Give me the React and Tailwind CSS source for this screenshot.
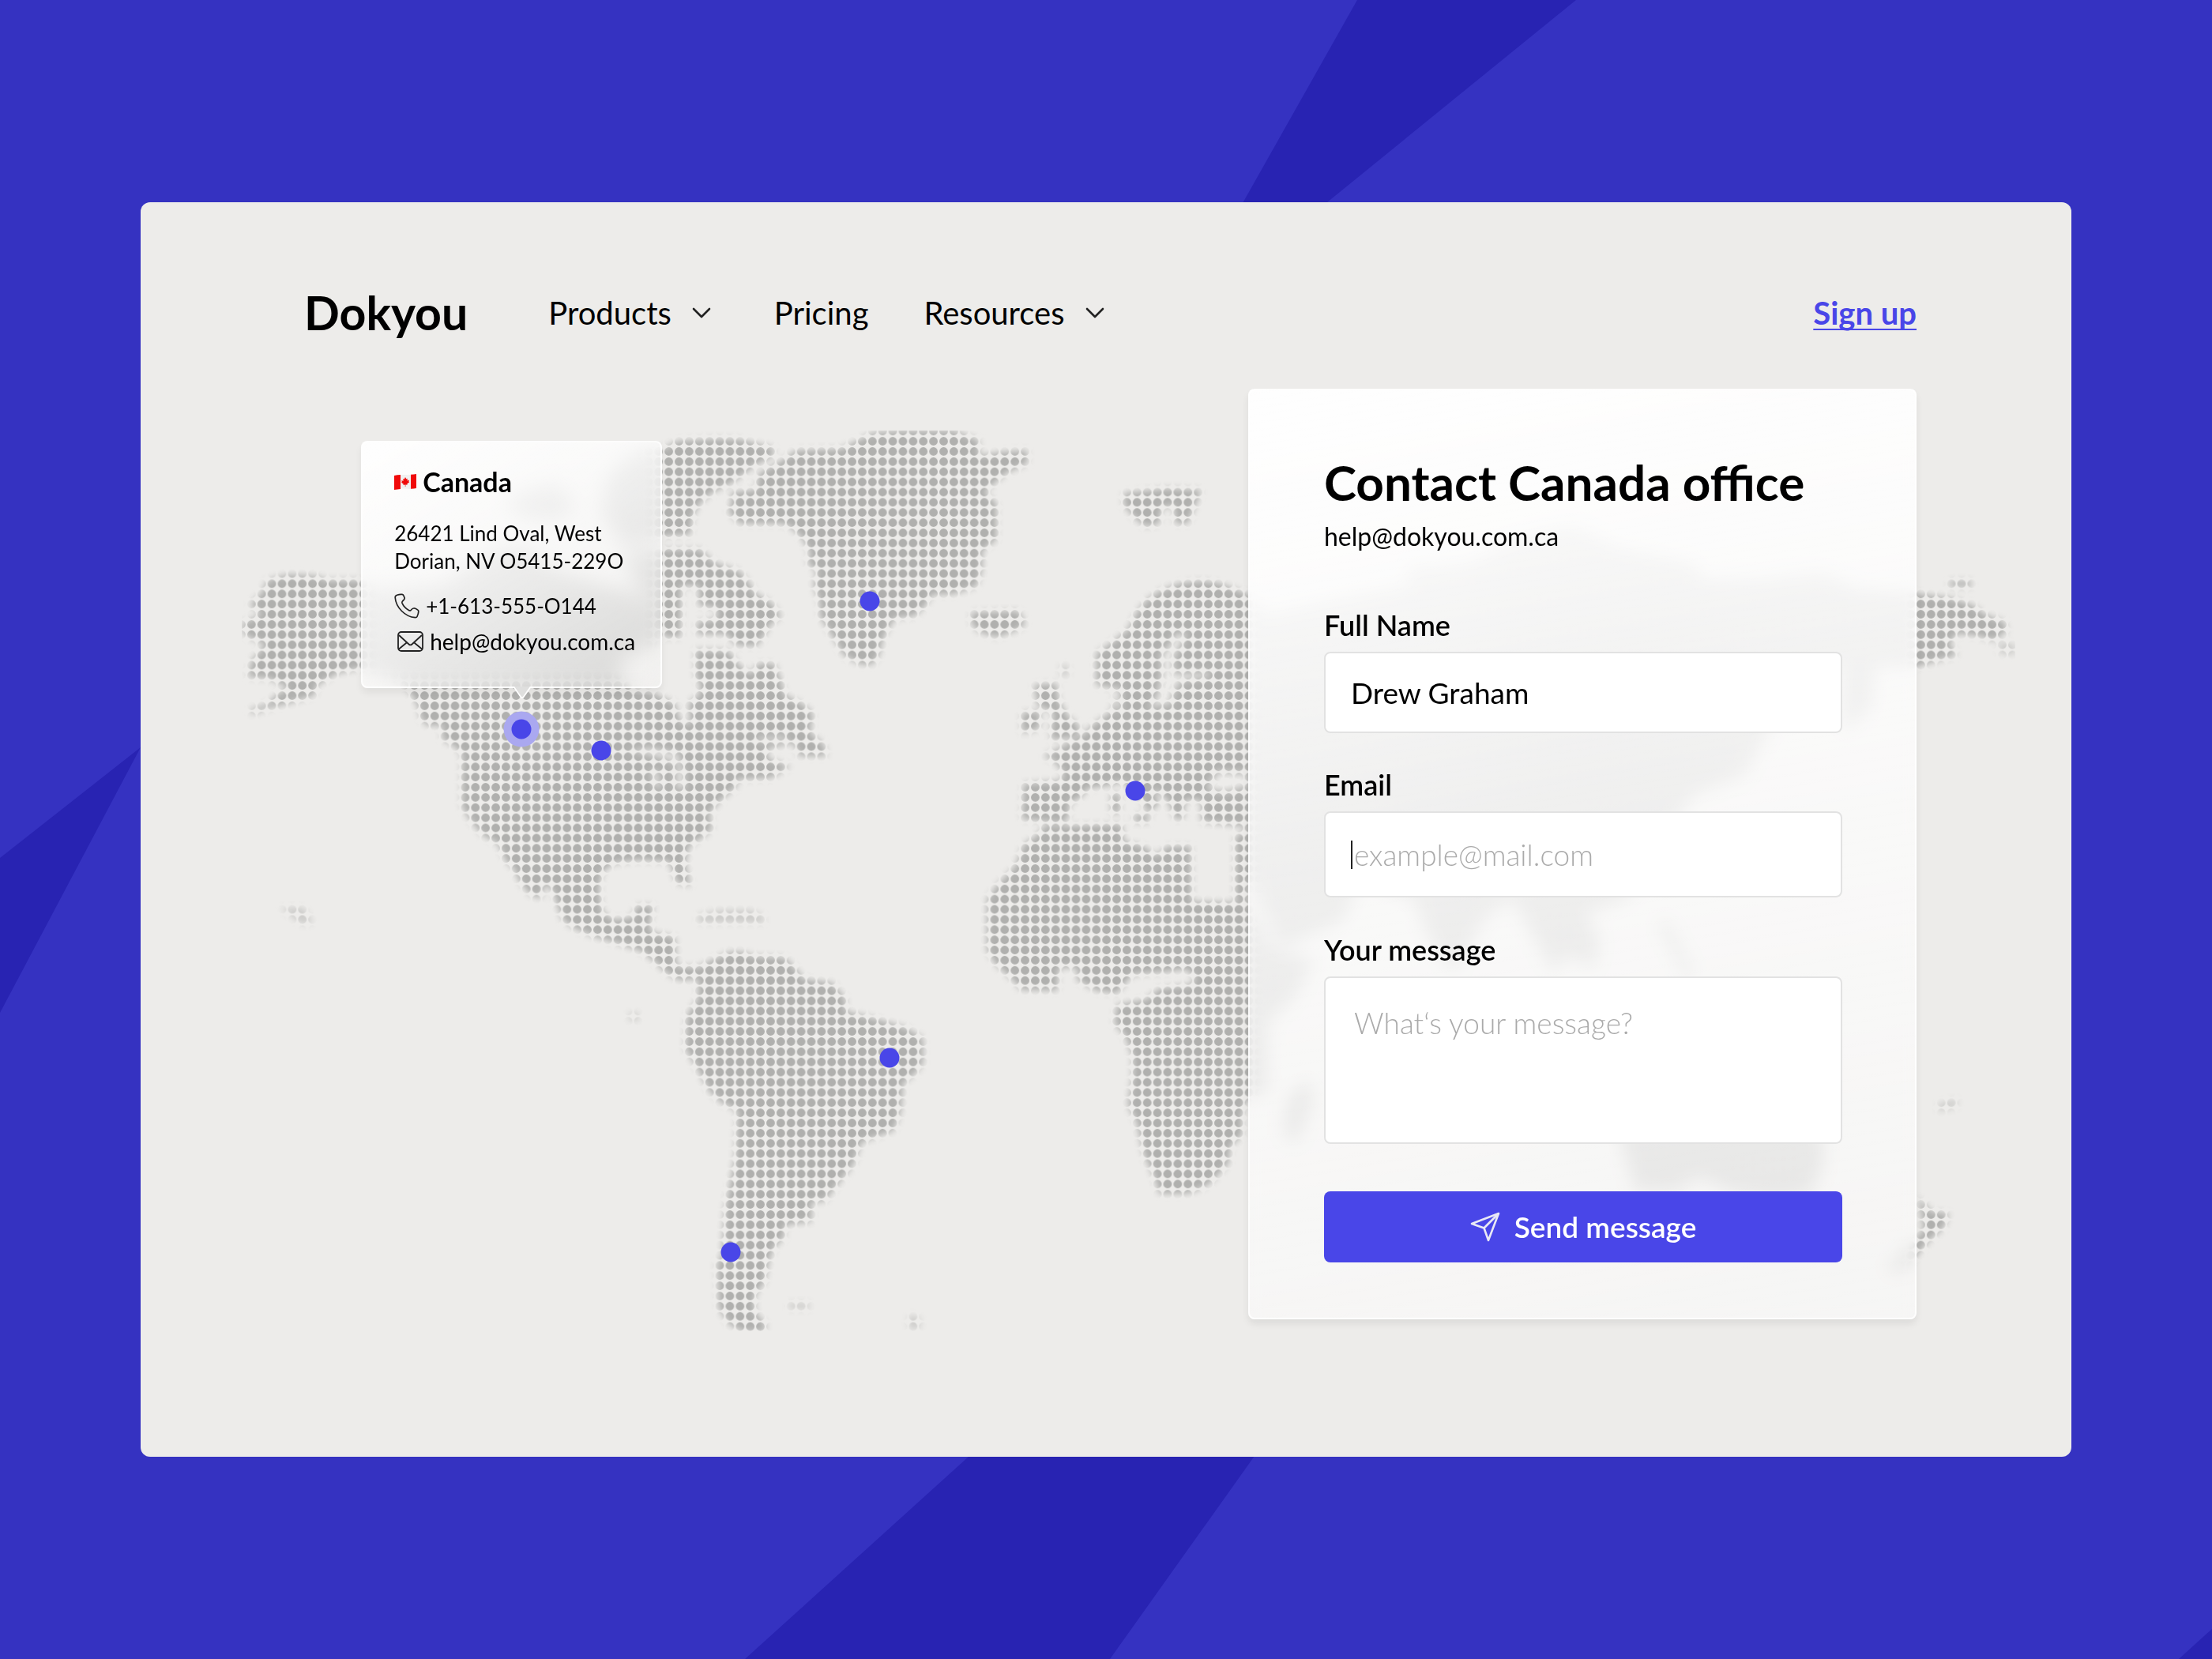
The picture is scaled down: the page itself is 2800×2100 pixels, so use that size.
import { useState } from 'react'

const landmasses = [
  // Alaska and the Aleutians
  '338,734 365,727 400,729 414,734 456,734 480,745 520,748 520,862 500,858 456,846 427,852 400,868 398,880 369,889 342,896 318,904 316,898 338,891 351,878 365,871 340,859 313,857 318,836 335,816 309,804 306,789 331,777 315,766 331,750',
  // Mainland North America
  '480,745 560,740 620,700 660,690 700,720 760,740 800,750 836,780 830,815 790,830 780,850 800,873 825,877 854,890 861,913 873,917 871,890 884,880 886,867 880,857 880,822 921,823 936,843 950,853 959,840 980,840 989,863 993,880 1014,890 1029,903 1025,927 1043,943 1046,957 1011,957 1004,940 971,948 971,960 1000,970 975,985 932,987 932,996 914,1011 898,1029 901,1050 887,1061 872,1071 867,1093 874,1121 856,1118 847,1091 807,1089 776,1093 762,1104 758,1125 762,1154 776,1164 800,1161 805,1146 827,1146 822,1171 825,1180 854,1186 856,1223 883,1224 883,1239 860,1241 843,1232 829,1218 811,1204 784,1195 753,1186 726,1175 711,1164 704,1143 699,1128 690,1118 684,1138 670,1132 657,1116 650,1100 639,1089 630,1068 610,1057 595,1039 584,1021 584,954 572,943 559,936 559,918 541,919 532,910 529,895 521,880 511,866 480,848',
  // Arctic islands
  '800,575 841,567 857,558 907,555 936,556 979,567 979,577 954,590 939,602 925,612 902,623 886,637 877,652 873,677 841,679 790,690 760,650 770,600',
  '640,630 700,610 730,640 700,660 650,650',
  '790,700 841,695 886,695 904,712 936,723 950,740 954,750 975,762 989,780 975,790 968,803 957,818 932,817 918,803 882,803 882,787 907,783 907,770 884,767 884,742 862,742 861,807 841,807 825,770 805,740',
  // Greenland
  '925,623 957,620 959,600 989,583 1007,570 1064,568 1086,557 1104,548 1139,545 1207,545 1239,557 1239,577 1268,572 1300,570 1300,587 1275,598 1257,613 1246,623 1261,637 1261,683 1243,697 1243,720 1236,742 1207,752 1179,753 1171,767 1157,780 1132,783 1118,807 1112,830 1104,841 1089,841 1068,830 1054,807 1037,780 1037,763 1029,740 1034,723 1021,713 1025,700 1014,680 1000,667 989,663 936,663 921,648 925,637',
  // Iceland, Svalbard
  '1229,775 1289,773 1298,790 1286,798 1261,807 1239,800 1229,790',
  '1422,624 1477,618 1520,620 1517,630 1507,653 1503,663 1487,663 1485,640 1470,643 1467,663 1450,667 1437,657 1422,640',
  // Great Britain, Ireland
  '1308,867 1337,865 1340,887 1352,907 1367,920 1363,933 1330,937 1330,920 1333,902 1313,893',
  '1293,902 1317,900 1315,923 1293,928',
  // Europe and Asia
  '1387,827 1407,813 1427,797 1437,777 1450,760 1467,748 1493,738 1520,735 1543,738 1580,752 1604,778 1673,762 1782,740 1782,717 1857,713 1914,684 1989,664 2046,692 2144,713 2155,733 2230,733 2305,725 2350,745 2426,751 2470,757 2497,766 2513,778 2537,787 2540,799 2523,811 2503,805 2477,802 2467,814 2477,829 2426,844 2374,843 2368,896 2333,925 2330,835 2280,860 2236,929 2207,982 2144,1006 2120,1040 2090,1100 2058,1138 2006,1157 2024,1187 2018,1224 1983,1209 1966,1231 1937,1179 1914,1138 1880,1160 1840,1231 1810,1190 1788,1138 1722,1115 1700,1165 1620,1200 1582,1110 1580,1143 1563,1141 1563,1060 1580,1047 1520,1040 1520,1013 1500,1013 1497,1037 1487,1037 1477,1013 1460,997 1467,1017 1453,1030 1440,1005 1420,990 1400,995 1377,998 1367,1010 1353,1017 1353,1033 1345,1042 1293,1037 1295,992 1343,988 1345,977 1333,963 1320,957 1347,943 1370,930 1383,917 1407,900 1410,880 1407,870 1387,867',
  '1406,1004 1417,1004 1417,1030 1406,1030',
  '1435,1031 1454,1031 1454,1041 1435,1041',
  // Africa, Madagascar
  '1310,1059 1323,1044 1353,1045 1420,1043 1422,1065 1447,1071 1463,1083 1477,1071 1507,1071 1508,1141 1582,1143 1610,1200 1662,1215 1640,1260 1604,1294 1604,1380 1577,1393 1572,1413 1572,1437 1557,1451 1555,1472 1540,1489 1527,1501 1503,1511 1467,1511 1460,1489 1447,1461 1438,1420 1427,1399 1433,1362 1433,1337 1423,1310 1410,1296 1413,1272 1450,1265 1467,1251 1507,1246 1513,1238 1500,1227 1473,1231 1433,1234 1413,1258 1387,1254 1363,1241 1363,1225 1340,1225 1338,1254 1292,1253 1282,1241 1259,1220 1249,1203 1249,1138 1262,1120 1285,1096 1295,1069',
  '1656,1364 1662,1394 1639,1449 1624,1434 1630,1390',
  // South America
  '883,1224 907,1212 923,1205 940,1205 953,1210 993,1212 1007,1226 1017,1239 1053,1244 1070,1264 1070,1280 1107,1289 1147,1301 1168,1314 1168,1346 1157,1360 1143,1371 1140,1406 1131,1431 1090,1446 1080,1474 1057,1503 1043,1521 1027,1521 1027,1546 993,1551 992,1567 980,1578 973,1596 967,1624 955,1639 955,1660 970,1678 966,1686 940,1686 922,1676 909,1656 907,1599 913,1589 917,1531 930,1464 933,1406 913,1396 897,1381 880,1349 867,1328 869,1285 883,1264 883,1239',
  // Australia, New Zealand, Indonesia
  '2050,1400 2110,1350 2180,1320 2230,1340 2270,1370 2305,1430 2308,1468 2293,1510 2250,1518 2190,1508 2150,1490 2121,1508 2070,1508 2052,1447',
  '2428,1516 2438,1526 2443,1533 2467,1536 2460,1554 2443,1569 2430,1584 2406,1610 2388,1606 2424,1570 2434,1556',
  '2098,1168 2110,1166 2144,1235 2136,1240',
  // Wrangel
  '2467,735 2495,735 2495,743 2467,743',
]

const faintIslands = [
  '354,1149 384,1149 396,1168 382,1170',
  '883,1158 910,1152 950,1152 967,1160 967,1168 883,1168',
  '998,1649 1024,1649 1024,1657 998,1657',
  '1150,1664 1164,1668 1164,1682 1150,1682',
  '796,1282 808,1282 808,1292 796,1292',
  '2453,1397 2477,1391 2477,1401 2453,1407',
  '2530,812 2550,816 2550,829 2530,827',
  '1342,842 1352,842 1352,856 1342,856',
]

// Baltic, Black Sea
const seas = [
  '1487,800 1503,800 1497,817 1487,833 1487,850 1533,850 1530,858 1497,863 1487,877 1483,893 1453,897 1463,877 1468,853 1468,827 1480,813',
  '1527,993 1540,974 1580,977 1580,997 1553,1005 1530,1003',
]

// Great Lakes, St. Lawrence, Danish straits
const lakes = [
  '793,950 822,944 860,952 866,975 850,966',
  '822,974 834,974 838,1000 826,996',
  '852,972 868,974 868,1000 854,1000',
  '958,932 996,930 996,938 958,940',
  '1388,869 1420,869 1420,900 1412,900 1408,872',
]

const pins = [
  { name: 'Canada', position: 'left-[19.73%] top-[42%]' },
  { name: 'United States', position: 'left-[23.87%] top-[43.7%]' },
  { name: 'Greenland', position: 'left-[37.77%] top-[31.78%]' },
  { name: 'Italy', position: 'left-[51.52%] top-[46.91%]' },
  { name: 'Brazil', position: 'left-[38.79%] top-[68.2%]' },
  { name: 'Chile', position: 'left-[30.58%] top-[83.69%]' },
]

function Backdrop() {
  return (
    <svg
      className="absolute inset-0 w-full h-full"
      viewBox="0 0 2800 2100"
      preserveAspectRatio="none"
      fill="#2823b2"
      aria-hidden="true"
    >
      <path d="M1718 0H1995L1680 256L1400 500H1436Z" />
      <path d="M1227 1843L1400 1700H1690L1588 1843L1405 2100H943Z" />
      <path d="M0 1086L178 946L0 1282Z" />
      <path d="M2758 2100L2800 2062V2100Z" />
    </svg>
  )
}

function WorldMap() {
  return (
    <svg className="absolute inset-0 w-full h-full" viewBox="178 256 2443 1588" aria-hidden="true">
      <defs>
        <pattern id="dots" x="375.8" y="745.3" width="12.885" height="12.88" patternUnits="userSpaceOnUse">
          <circle cx="6.44" cy="6.44" r="5.4" fill="#b0b0ae" />
        </pattern>
        <filter id="soften" x="0" y="0" width="100%" height="100%">
          <feGaussianBlur stdDeviation="4" />
        </filter>
        <mask id="land" maskUnits="userSpaceOnUse" x="178" y="256" width="2443" height="1588">
          <g filter="url(#soften)">
            <g fill="#fff">
              {landmasses.map((points) => <polygon key={points} points={points} />)}
            </g>
            <g fill="#888">
              {faintIslands.map((points) => <polygon key={points} points={points} />)}
            </g>
            <g fill="#000">
              {seas.map((points) => <polygon key={points} points={points} />)}
            </g>
            <g fill="#000" fillOpacity="0.8">
              {lakes.map((points) => <polygon key={points} points={points} />)}
            </g>
          </g>
        </mask>
      </defs>
      <rect x="178" y="256" width="2443" height="1588" fill="url(#dots)" mask="url(#land)" />
    </svg>
  )
}

function Chevron() {
  return (
    <svg className="w-6 h-6" viewBox="0 0 24 24" fill="none" stroke="#222" strokeWidth="2.600" strokeLinecap="round" strokeLinejoin="round" aria-hidden="true">
      <path d="M2 7L12 17L22 7" />
    </svg>
  )
}

function CanadaFlag() {
  return (
    <svg className="w-7 h-5" viewBox="0 0 28 20" aria-hidden="true">
      <path d="M0 2Q7 .5 14 1T28 0V18Q21 19.500 14 18.500T0 20Z" fill="#f1f1f1" />
      <path d="M0 2Q4 1 8 1V19Q4 19.500 0 20Z" fill="#f00a0a" />
      <path d="M21 .8Q25 .8 28 0V18Q25 18.600 21 18.700Z" fill="#f00a0a" />
      <path d="M14 4L15.300 6.300L16.800 5.700L16.500 8.500L19 7.600L18.400 9.500L19.200 10.300L16.300 12.600L16.600 13.700L14.400 13.400V16H13.800V13.400L11.500 13.900L11.800 12.700L9 10.800L9.800 10L9.200 8.200L11.600 8.700L11.300 6L12.800 6.500Z" fill="#f00a0a" />
    </svg>
  )
}

function PhoneIcon() {
  return (
    <svg className="w-8 h-8" viewBox="0 0 32 32" fill="none" stroke="#222" strokeWidth="1.700" strokeLinejoin="round" aria-hidden="true">
      <path d="M3.500 2.300Q7 1 10 1.400Q11.500 1.600 12.200 3.500Q13.500 6 13 7Q12.700 8 10.500 10Q9.500 11 10 12.300Q12.500 18 18.500 21.500Q20 22.500 21.200 21.300Q23 19.200 24.500 19Q26 18.600 29 20.500Q31 21.500 30.800 23Q30.600 26 29 29.500Q28.500 30.800 26.500 30.700Q17 30 9.500 22.500Q2 15 1.200 5.500Q1 3.200 3.500 2.300Z" />
    </svg>
  )
}

function MailIcon() {
  return (
    <svg className="w-[33px] h-[26px]" viewBox="0 0 33 26" fill="none" stroke="#222" strokeWidth="1.800" strokeLinejoin="round" aria-hidden="true">
      <rect x="1" y="1" width="31" height="24" rx="4" />
      <path d="M2 5L14.500 16.500Q16.500 18.300 18.500 16.500L31 5M2 22.500L12 14.300M31 22.500L21 14.300" />
    </svg>
  )
}

function SendIcon() {
  return (
    <svg className="w-[38px] h-[38px]" viewBox="0 0 38 38" fill="none" stroke="#e9e9f5" strokeWidth="2.600" strokeLinejoin="round" aria-hidden="true">
      <path d="M36 2L2 15L17.500 20.500L23 36Z" />
      <path d="M36 2L17.500 20.500" />
    </svg>
  )
}

function OfficeCard() {
  return (
    <div className="absolute bottom-[52px] -left-[203px] w-[381px] h-[313px] pt-[34px] pl-10 rounded-lg border-2 border-white/80 bg-linear-150 from-white/95 via-white/65 via-50% to-white/25 backdrop-blur-[12px] shadow-[0_6px_10px_rgba(0,0,0,0.06)]">
      <h2 className="flex items-center gap-2 text-[34px] leading-8 font-bold">
        <CanadaFlag />
        Canada
      </h2>
      <p className="mt-8 text-[26px] leading-[35px] whitespace-nowrap">
        26421 Lind Oval, West
        <br />
        Dorian, NV O5415-229O
      </p>
      <a href="tel:+16135550144" className="mt-[22px] flex items-center gap-2 text-[26px] leading-[35px]">
        <PhoneIcon />
        +1-613-555-O144
      </a>
      <a href="mailto:help@dokyou.com.ca" className="mt-[10px] pl-1 flex items-center gap-2 text-[28px] leading-[35px]">
        <MailIcon />
        help@dokyou.com.ca
      </a>
      <svg className="absolute top-full left-[190px] w-6 h-4" viewBox="0 0 24 16" aria-hidden="true">
        <path d="M1 0L10.500 13.500Q12 15 13.500 13.500L23 0Z" fill="#dfdfde" />
        <path d="M1 0L10.500 13.500Q12 15 13.500 13.500L23 0" fill="none" stroke="#fff" strokeWidth="1.800" />
      </svg>
    </div>
  )
}

function ContactForm() {
  const [name, setName] = useState('Drew Graham')
  const [email, setEmail] = useState('')
  const [message, setMessage] = useState('')

  return (
    <form
      onSubmit={(e) => e.preventDefault()}
      className="relative w-[846px] pl-[94px] pr-[92px] pt-20 pb-[70px] flex flex-col rounded-lg border-2 border-white/80 bg-linear-170 from-white/95 via-white/70 via-45% to-white/50 backdrop-blur-[10px] shadow-[0_6px_10px_rgba(0,0,0,0.07)]"
    >
      <h1 className="text-[62px] leading-[72px] font-bold whitespace-nowrap">Contact Canada office</h1>
      <a href="mailto:help@dokyou.com.ca" className="mt-[13px] text-[32px] leading-10">help@dokyou.com.ca</a>

      <label htmlFor="name" className="mt-[72px] text-[36px] leading-10 font-semibold">Full Name</label>
      <input
        id="name"
        type="text"
        value={name}
        onChange={(e) => setName(e.target.value)}
        className="mt-[14px] h-[103px] px-8 rounded-lg border-2 border-[#e2e2e2] bg-white text-[37px] outline-none"
      />

      <label htmlFor="email" className="mt-[45px] text-[36px] leading-10 font-semibold">Email</label>
      <div className="mt-[14px] h-[109px] px-8 flex items-center rounded-lg border-2 border-[#e2e2e2] bg-white">
        <span className="w-[2px] h-9 bg-[#222]" />
        <input
          id="email"
          type="email"
          placeholder="example@mail.com"
          value={email}
          onChange={(e) => setEmail(e.target.value)}
          className="flex-1 pl-[2px] text-[37px] leading-[46px] font-light placeholder:text-[#aaa] outline-none"
        />
      </div>

      <label htmlFor="message" className="mt-[46px] text-[36px] leading-10 font-semibold">Your message</label>
      <textarea
        id="message"
        placeholder="What‘s your message?"
        value={message}
        onChange={(e) => setMessage(e.target.value)}
        className="mt-[14px] h-[212px] px-9 py-[34px] rounded-lg border-2 border-[#e2e2e2] bg-white text-[37px] leading-[46px] font-light placeholder:text-[#aaa] resize-none outline-none"
      />

      <button type="submit" className="mt-[60px] h-[90px] flex items-center justify-center gap-[18px] rounded-lg bg-[#4946e8] text-white text-[37px] font-semibold">
        <SendIcon />
        Send message
      </button>
    </form>
  )
}

export default function App() {
  return (
    <div className="relative min-h-screen bg-[#3532c1] px-[178px] py-64 text-black font-[Lato,'Open_Sans',sans-serif]">
      <Backdrop />

      <div className="relative rounded-xl bg-[#edecea] overflow-hidden">
        <WorldMap />

        <header className="relative h-[236px] pl-[207px] pr-[196px] pt-[100px] flex items-start leading-[80px]">
          <a href="#" className="text-[59px] font-bold">Dokyou</a>
          <nav className="ml-[102px] flex items-center gap-[70px] text-[40px]">
            <button type="button" className="pr-[10px] flex items-center gap-[26px]">Products <Chevron /></button>
            <a href="#pricing">Pricing</a>
            <button type="button" className="flex items-center gap-[26px]">Resources <Chevron /></button>
          </nav>
          <a href="#signup" className="ml-auto text-[40px] font-bold text-[#4946e8] underline decoration-2 underline-offset-[5px] [text-decoration-skip-ink:none]">Sign up</a>
        </header>

        {pins.map((pin) => (
          <button
            key={pin.name}
            type="button"
            aria-label={pin.name}
            className={`absolute ${pin.position} w-[25px] h-[25px] -translate-1/2 rounded-full bg-[#4946e8] ${
              pin.name === 'Canada' ? 'ring-[10px] ring-[#aaa8f0]' : ''
            }`}
          />
        ))}
        <div className="absolute left-[19.73%] top-[42%]">
          <OfficeCard />
        </div>

        <main className="pb-[174px] pr-[196px] flex justify-end">
          <ContactForm />
        </main>
      </div>
    </div>
  )
}
